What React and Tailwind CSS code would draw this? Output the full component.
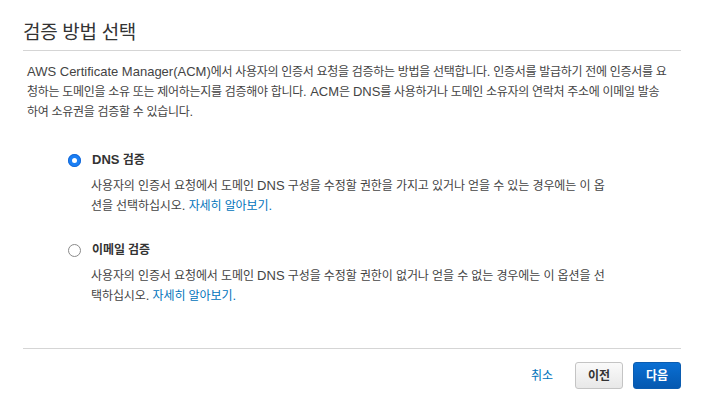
import React from "react";

const font = { fontFamily: '"Liberation Sans", "Noto Sans CJK KR", sans-serif' };

function T({ children }) {
  const parts = String(children).split(/([A-Za-z0-9().]+(?: [A-Za-z0-9().]+)*)/g);
  return (
    <>
      {parts.map((p, i) =>
        i % 2 === 1 ? (
          <span key={i} className="text-[13px] tracking-normal">
            {p}
          </span>
        ) : (
          <React.Fragment key={i}>{p}</React.Fragment>
        )
      )}
    </>
  );
}

function Radio({ checked }) {
  if (checked) {
    return (
      <span className="flex h-[13px] w-[13px] shrink-0 items-center justify-center rounded-full bg-[#1a7ff5] shadow-[inset_0_0_0_1px_#1769d6]">
        <span className="block h-[5px] w-[5px] rounded-full bg-white" />
      </span>
    );
  }
  return (
    <span className="block h-[13px] w-[13px] shrink-0 rounded-full border border-[#8a8a8a] bg-white" />
  );
}

function Option({ checked, label, lines }) {
  return (
    <div>
      <div className="flex h-[20px] items-center pl-[1px]">
        <Radio checked={checked} />
        <span className="ml-[11px] text-[12px] font-bold leading-[20px] tracking-[-0.1px] text-[#333]">
          <T>{label}</T>
        </span>
      </div>
      <p className="mt-[6px] pl-[24px] text-[12px] leading-[20px] tracking-[-0.1px] text-[#444] whitespace-nowrap">
        <T>{lines[0]}</T>
        <br />
        <T>{lines[1]}</T>{" "}
        <a className="text-[#0073bb]">
          자세히 알아보기<span className="text-[13px] tracking-normal">.</span>
        </a>
      </p>
    </div>
  );
}

export default function App() {
  return (
    <div className="h-[405px] w-[704px] bg-white px-[23px]" style={font}>
      <h2 className="border-b border-[#d5d5d5] pb-[3px] pt-[19px] text-[19px] leading-[28px] tracking-[-0.3px] text-[#333]">
        검증 방법 선택
      </h2>
      <p className="mt-[11px] pl-[4px] text-[12px] leading-[20px] tracking-[-0.3px] text-[#444] whitespace-nowrap">
        <T>AWS Certificate Manager(ACM)에서 사용자의 인증서 요청을 검증하는 방법을 선택합니다. 인증서를 발급하기 전에 인증서를 요</T>
        <br />
        <T>청하는 도메인을 소유 또는 제어하는지를 검증해야 합니다. ACM은 DNS를 사용하거나 도메인 소유자의 연락처 주소에 이메일 발송</T>
        <br />
        <T>하여 소유권을 검증할 수 있습니다.</T>
      </p>
      <div className="mt-[28px] pl-[44px]">
        <Option
          checked
          label="DNS 검증"
          lines={[
            "사용자의 인증서 요청에서 도메인 DNS 구성을 수정할 권한을 가지고 있거나 얻을 수 있는 경우에는 이 옵",
            "션을 선택하십시오.",
          ]}
        />
        <div className="mt-[24px]">
          <Option
            label="이메일 검증"
            lines={[
              "사용자의 인증서 요청에서 도메인 DNS 구성을 수정할 권한이 없거나 얻을 수 없는 경우에는 이 옵션을 선",
              "택하십시오.",
            ]}
          />
        </div>
      </div>
      <div className="mt-[42px] flex items-center justify-end border-t border-[#d5d5d5] pt-[13px]">
        <a className="mr-[22px] text-[12px] text-[#0073bb]">취소</a>
        <button className="h-[27px] w-[48px] rounded-[3px] border border-[#c4c4c4] bg-gradient-to-b from-[#fafafa] to-[#e8e8e8] text-[12px] font-bold text-[#333]">
          이전
        </button>
        <button className="ml-[10px] h-[27px] w-[48px] rounded-[3px] border border-[#0b5cb0] bg-gradient-to-b from-[#0a6fd3] to-[#0558b0] text-[12px] font-bold text-white">
          다음
        </button>
      </div>
    </div>
  );
}
